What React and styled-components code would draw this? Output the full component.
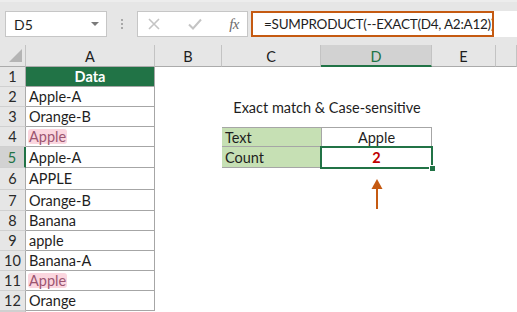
import React from 'react';
import styled, { createGlobalStyle, css } from 'styled-components';

const GlobalStyle = createGlobalStyle`
  html, body {
    margin: 0;
    padding: 0;
    background: #ffffff;
  }
  body {
    font-family: Lato, "Open Sans", "Liberation Sans", sans-serif;
    color: #1e1e1e;
  }
`;

const HEIGHTS = [20, 20, 20, 20, 21, 22, 21, 20, 20, 20, 20, 20];
const COLUMNS = ['A', 'B', 'C', 'D', 'E', ''];
const DATA = ['Apple-A', 'Orange-B', 'Apple', 'Apple-A', 'APPLE', 'Orange-B', 'Banana', 'apple', 'Banana-A', 'Apple', 'Orange'];

const GREEN = '#217346';
const ORANGE = '#c55a11';

const Page = styled.div`
  width: 517px;
  height: 312px;
  overflow: hidden;
  background: #fff;
`;

// barre de formule
const Toolbar = styled.div`
  height: 45px;
  box-sizing: border-box;
  background: #e6e6e6;
  border-top: 2px solid #ededed;
  padding-top: 9px;
  display: flex;
  align-items: flex-start;
`;

const NameBox = styled.div`
  margin-left: 5px;
  width: 102px;
  height: 26px;
  box-sizing: border-box;
  background: #fff;
  border: 1px solid #c6c6c6;
  display: flex;
  align-items: center;
  justify-content: space-between;
  padding: 0 7px 0 8px;
  font-size: 14px;
`;

const Caret = styled.span`
  width: 0;
  height: 0;
  border-left: 4px solid transparent;
  border-right: 4px solid transparent;
  border-top: 4px solid #7a7a7a;
`;

const Grip = styled.div`
  width: 30px;
  height: 26px;
  display: flex;
  flex-direction: column;
  align-items: center;
  justify-content: center;
  gap: 2px;

  span {
    width: 2px;
    height: 2px;
    background: #a8a8a8;
  }
`;

const FxBox = styled.div`
  width: 111px;
  height: 26px;
  box-sizing: border-box;
  background: #fff;
  border: 1px solid #c6c6c6;
  display: flex;
  align-items: center;
  padding: 0 8px 0 10px;
  justify-content: space-between;
`;

const FxLabel = styled.span`
  font-family: "Liberation Serif", serif;
  font-style: italic;
  font-size: 15px;
  color: #6b6b6b;
  letter-spacing: -0.5px;
`;

const FormulaBar = styled.div`
  flex: 1;
  margin-left: 3px;
  height: 26px;
  background: #fff;
  display: flex;
  overflow: hidden;
`;

const Annotated = styled.div`
  width: 243px;
  height: 26px;
  box-sizing: border-box;
  border: 2px solid ${ORANGE};
  display: flex;
  align-items: center;
  padding-left: 11px;
  font-size: 13.5px;
  letter-spacing: -0.25px;
  white-space: nowrap;
  overflow: hidden;
`;

// feuille
const Sheet = styled.div`
  display: grid;
  grid-template-columns: 26px 129px 67px 99px 111px 64px 1fr;
  grid-template-rows: 22px ${HEIGHTS.map((h) => `${h}px`).join(' ')} 1fr;
  height: 267px;
  font-size: 14.5px;
`;

const Corner = styled.div`
  grid-row: 1;
  grid-column: 1;
  background: #e6e6e6;
  box-sizing: border-box;
  border-right: 1px solid #c3c3c3;
  border-bottom: 1px solid #ababab;
  position: relative;

  &::after {
    content: '';
    position: absolute;
    right: 3px;
    bottom: 4px;
    width: 0;
    height: 0;
    border-left: 13px solid transparent;
    border-bottom: 13px solid #b4b4b4;
  }
`;

const ColHead = styled.div`
  grid-row: 1;
  grid-column: ${(p) => p.$col};
  background: ${(p) => (p.$active ? '#d2d2d2' : '#e6e6e6')};
  color: ${(p) => (p.$active ? GREEN : '#1e1e1e')};
  box-sizing: border-box;
  border-right: 1px solid #c3c3c3;
  border-bottom: ${(p) => (p.$active ? `2px solid ${GREEN}` : '1px solid #ababab')};
  display: flex;
  align-items: center;
  justify-content: center;
  padding-top: 2px;
`;

const RowHead = styled.div`
  grid-row: ${(p) => p.$row};
  grid-column: 1;
  background: ${(p) => (p.$active ? '#d2d2d2' : '#e6e6e6')};
  color: ${(p) => (p.$active ? GREEN : '#2a2a2a')};
  box-sizing: border-box;
  border-bottom: 1px solid #d0d0d0;
  border-right: ${(p) => (p.$active ? `2px solid ${GREEN}` : '1px solid #ababab')};
  display: flex;
  align-items: center;
  justify-content: center;
`;

const DataCell = styled.div`
  grid-row: ${(p) => p.$row};
  grid-column: 2;
  box-sizing: border-box;
  border-right: 1px solid #a6a6a6;
  border-bottom: 1px solid #a6a6a6;
  display: flex;
  align-items: center;
  padding-left: 3px;
  white-space: nowrap;

  ${(p) =>
    p.$header &&
    css`
      background: ${GREEN};
      color: #fff;
      font-weight: bold;
      justify-content: center;
      padding-left: 0;
    `}
`;

const Match = styled.span`
  background: #fbd6df;
  color: #9b5571;
  border-radius: 3px;
  padding: 0 1px;
  margin-left: -1px;
  line-height: 15px;
`;

const Title = styled.div`
  grid-row: 3 / span 2;
  grid-column: 4 / span 2;
  display: flex;
  align-items: center;
  justify-content: center;
  font-size: 14.5px;
  padding-top: 1px;
`;

const LabelCell = styled.div`
  grid-row: ${(p) => p.$row};
  grid-column: 4;
  background: #c6e0b4;
  box-sizing: border-box;
  border-top: ${(p) => (p.$first ? '1px solid #a6a6a6' : '0')};
  border-bottom: 1px solid #a6a6a6;
  display: flex;
  align-items: center;
  padding-left: 3px;
`;

const ValueCell = styled.div`
  grid-row: ${(p) => p.$row};
  grid-column: 5;
  box-sizing: border-box;
  border-top: ${(p) => (p.$first ? '1px solid #a6a6a6' : '0')};
  border-left: 1px solid #a6a6a6;
  border-right: 1px solid #a6a6a6;
  border-bottom: 1px solid #a6a6a6;
  display: flex;
  align-items: center;
  justify-content: center;
  position: relative;

  ${(p) =>
    p.$selected &&
    css`
      color: #c00000;
      font-weight: bold;

      &::after {
        content: '';
        position: absolute;
        top: -1px;
        left: -2px;
        right: -2px;
        bottom: -2px;
        border: 2px solid ${GREEN};
      }

      &::before {
        content: '';
        position: absolute;
        right: -5px;
        bottom: -5px;
        width: 5px;
        height: 5px;
        background: ${GREEN};
        border: 1px solid #fff;
        z-index: 1;
      }
    `}
`;

const ArrowSlot = styled.div`
  grid-row: 7 / span 2;
  grid-column: 5;
  display: flex;
  justify-content: center;
  align-items: flex-start;
  padding-top: 11px;
`;

const UpArrow = () => (
  <svg width="12" height="30" viewBox="0 0 12 30">
    <polygon points="6,0 0.5,10 11.5,10" fill={ORANGE} />
    <rect x="5" y="9" width="2" height="21" fill={ORANGE} />
  </svg>
);

const CrossIcon = () => (
  <svg width="12" height="12" viewBox="0 0 12 12">
    <path d="M1 1 L11 11 M11 1 L1 11" stroke="#c4c4c4" strokeWidth="1.6" fill="none" />
  </svg>
);

const CheckIcon = () => (
  <svg width="14" height="12" viewBox="0 0 14 12">
    <path d="M1 6.5 L5 10.5 L13 1.5" stroke="#c4c4c4" strokeWidth="2" fill="none" />
  </svg>
);

export default function App() {
  return (
    <Page>
      <GlobalStyle />
      <Toolbar>
        <NameBox>
          D5
          <Caret />
        </NameBox>
        <Grip>
          <span />
          <span />
          <span />
        </Grip>
        <FxBox>
          <CrossIcon />
          <CheckIcon />
          <FxLabel>fx</FxLabel>
        </FxBox>
        <FormulaBar>
          <Annotated>=SUMPRODUCT(--EXACT(D4, A2:A12))</Annotated>
        </FormulaBar>
      </Toolbar>

      <Sheet>
        <Corner />
        {COLUMNS.map((c, i) => (
          <ColHead key={i} $col={i + 2} $active={c === 'D'}>
            {c}
          </ColHead>
        ))}

        {HEIGHTS.map((_, i) => (
          <RowHead key={i} $row={i + 2} $active={i + 1 === 5}>
            {i + 1}
          </RowHead>
        ))}
        <RowHead $row={14} />

        <DataCell $row={2} $header>
          Data
        </DataCell>
        {DATA.map((d, i) => (
          <DataCell key={i} $row={i + 3}>
            {d === 'Apple' ? <Match>{d}</Match> : d}
          </DataCell>
        ))}

        <Title>Exact match &amp; Case-sensitive</Title>

        <LabelCell $row={5} $first>
          Text
        </LabelCell>
        <ValueCell $row={5} $first>
          Apple
        </ValueCell>
        <LabelCell $row={6}>Count</LabelCell>
        <ValueCell $row={6} $selected>
          2
        </ValueCell>

        <ArrowSlot>
          <UpArrow />
        </ArrowSlot>
      </Sheet>
    </Page>
  );
}
